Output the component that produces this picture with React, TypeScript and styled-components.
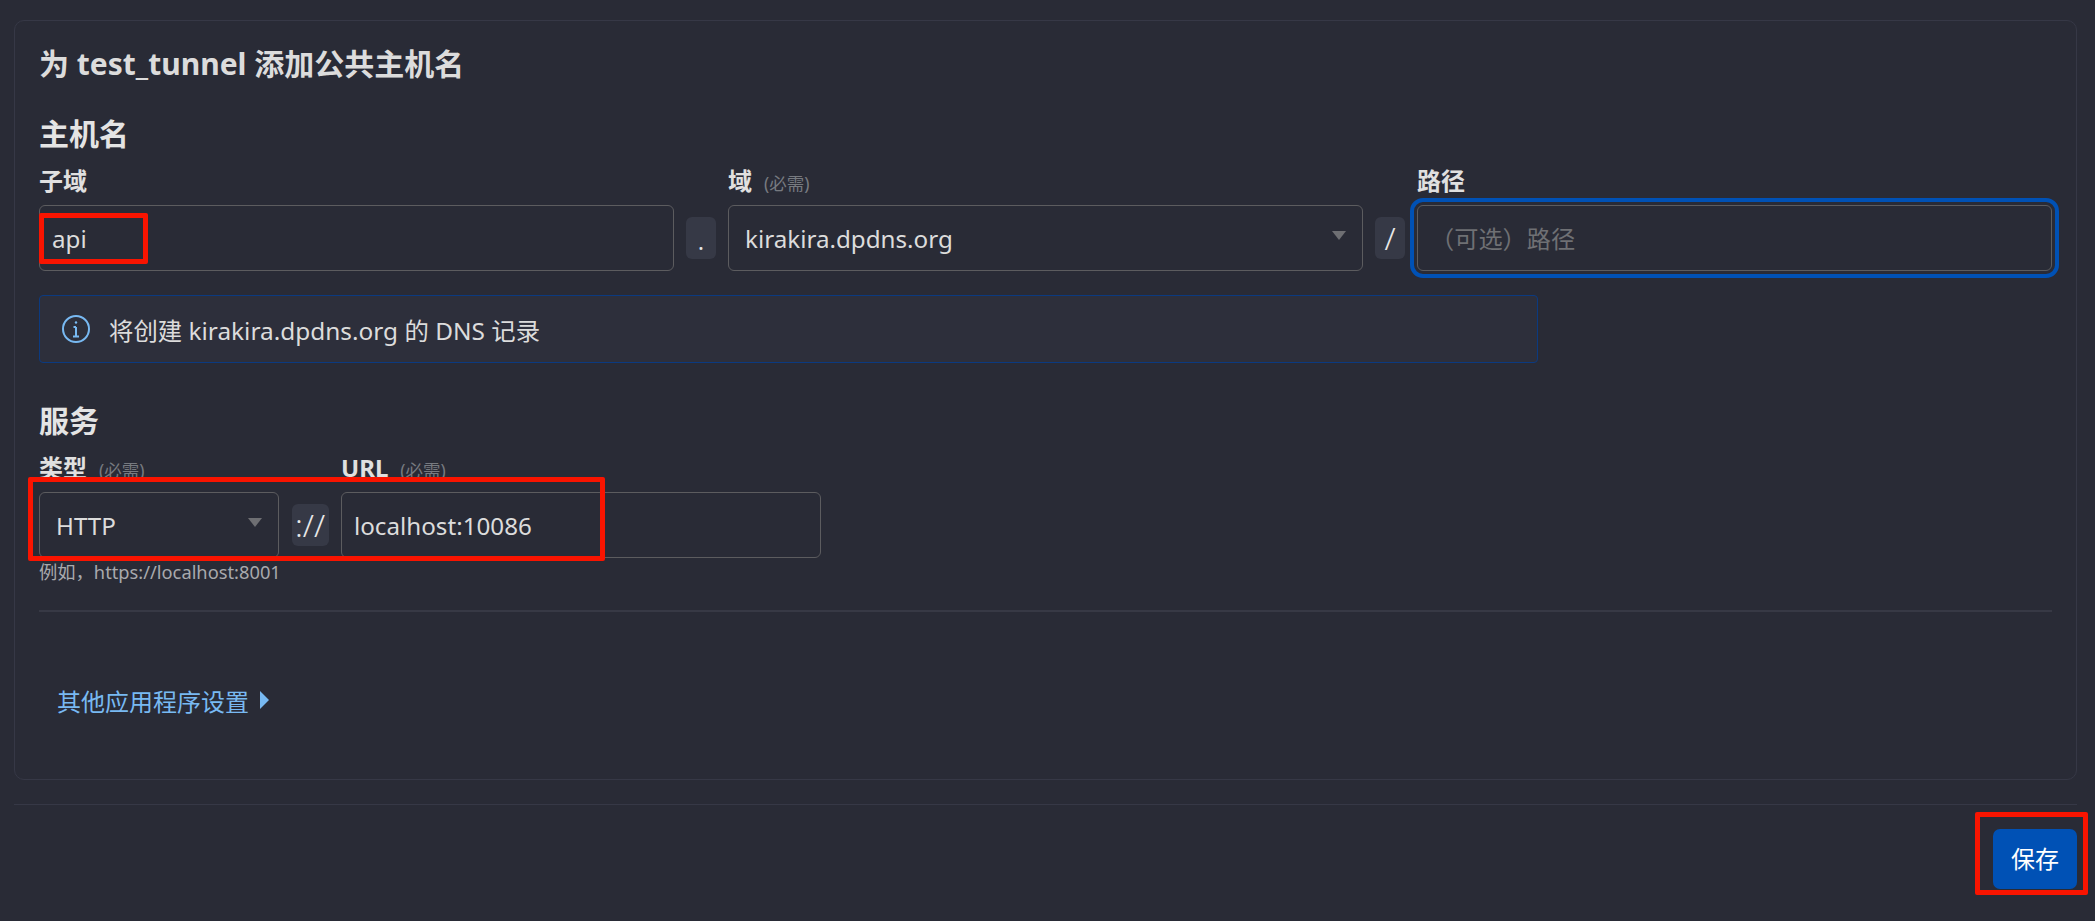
import React from "react";
import styled, { createGlobalStyle } from "styled-components";

const GlobalStyle = createGlobalStyle`
  html, body {
    margin: 0;
    padding: 0;
    background: #292b36;
  }
  body {
    font-family: "Noto Sans", "Noto Sans CJK SC", sans-serif;
    color: #dcdcdc;
  }
`;

const Page = styled.div`
  position: relative;
  width: 2095px;
  height: 921px;
  padding: 20px 18px 0 14px;
  box-sizing: border-box;
  overflow: hidden;
`;

const Card = styled.section`
  height: 760px;
  box-sizing: border-box;
  border: 1px solid #363846;
  border-radius: 10px;
  padding: 24px 24px 0;
`;

const Title = styled.h2`
  margin: 0;
  height: 38px;
  line-height: 38px;
  font-size: 30px;
  font-weight: 700;
  color: #dcdcdc;
`;

const SectionTitle = styled.h3<{ $top: number }>`
  margin: ${(p) => p.$top}px 0 12px;
  height: 40px;
  line-height: 40px;
  font-size: 30px;
  font-weight: 700;
  color: #e4e4e4;
`;

const HostGrid = styled.div`
  display: grid;
  grid-template-columns: 635px 30px 635px 30px 635px;
  column-gap: 12px;
  align-items: center;
`;

const ServiceGrid = styled.div`
  display: grid;
  grid-template-columns: 240px 37px 480px;
  column-gap: 12.5px;
  align-items: center;
`;

const Label = styled.label<{ $column: number }>`
  grid-column: ${(p) => p.$column};
  height: 30px;
  line-height: 30px;
  margin-bottom: 9px;
  font-size: 24px;
  font-weight: 700;
  color: #e0e0e0;
  white-space: nowrap;
`;

const Required = styled.span`
  margin-left: 12px;
  font-size: 17.5px;
  font-weight: 400;
  color: #777a80;
`;

const TextInput = styled.input`
  display: block;
  width: 100%;
  height: 66px;
  box-sizing: border-box;
  background: transparent;
  border: 1px solid #5c5c5f;
  border-radius: 6px;
  padding: 0 12px;
  font: 400 24.2px "Noto Sans", "Noto Sans CJK SC", sans-serif;
  color: #dcdcdc;
  outline: none;

  &::placeholder {
    color: #6f7074;
  }
`;

const FocusedInput = styled(TextInput)`
  outline: 4px solid #0051b5;
  outline-offset: 3px;
`;

const SelectBox = styled.div`
  position: relative;
  display: flex;
  align-items: center;
  height: 66px;
  box-sizing: border-box;
  border: 1px solid #5c5c5f;
  border-radius: 6px;
  padding: 0 16px;
  font-size: 24.2px;
  color: #dcdcdc;
`;

const Caret = styled.span`
  position: absolute;
  right: 16px;
  top: 25px;
  width: 0;
  height: 0;
  border-left: 7px solid transparent;
  border-right: 7px solid transparent;
  border-top: 9px solid #6e6f73;
`;

const Separator = styled.span`
  display: flex;
  align-items: center;
  justify-content: center;
  height: 42px;
  border-radius: 6px;
  background: #363946;
  font-size: 32px;
  font-weight: 300;
  line-height: 1;
  color: #e8e8e8;
`;

const InfoBox = styled.div`
  display: flex;
  align-items: center;
  gap: 19px;
  width: 1499px;
  height: 68px;
  box-sizing: border-box;
  margin-top: 24px;
  padding-left: 22px;
  background: #2d2f3b;
  border: 1px solid #0b3a80;
  border-radius: 4px;
  font-size: 24.4px;
  color: #dcdcdc;
`;

const Hint = styled.div`
  margin-top: 2px;
  height: 24px;
  line-height: 24px;
  font-size: 18.3px;
  color: #a8a9ad;
`;

const Divider = styled.hr`
  margin: 26px 0 0;
  border: 0;
  height: 2px;
  background: #373945;
`;

const MoreLink = styled.a`
  display: inline-flex;
  align-items: center;
  gap: 11px;
  margin: 72px 0 0 18px;
  height: 32px;
  font-size: 24px;
  color: #78b9f2;
`;

const Footer = styled.footer`
  margin-top: 24px;
  border-top: 1px solid #363846;
  padding-top: 24px;
  display: flex;
  justify-content: flex-end;
`;

const SaveButton = styled.button`
  width: 84px;
  height: 60px;
  border: 0;
  border-radius: 7px;
  padding: 0 0 3px;
  background: #0051b5;
  color: #fff;
  font: 400 24px "Noto Sans", "Noto Sans CJK SC", sans-serif;
`;

// red rectangles someone drew over the screenshot
const Annotation = styled.div<{ $x: number; $y: number; $w: number; $h: number }>`
  position: absolute;
  left: ${(p) => p.$x}px;
  top: ${(p) => p.$y}px;
  width: ${(p) => p.$w}px;
  height: ${(p) => p.$h}px;
  box-sizing: border-box;
  border: 5px solid #f91400;
  border-radius: 2px;
  pointer-events: none;
`;

const InfoIcon = () => (
  <svg width="28" height="28" viewBox="0 0 28 28" fill="none" stroke="#78b9f2" strokeWidth="2">
    <circle cx="14" cy="14" r="13" />
    <path d="M14 12v9M11.5 12H14M11 21.5h6" />
    <circle cx="14" cy="7.5" r="1.2" fill="#78b9f2" stroke="none" />
  </svg>
);

const ArrowIcon = () => (
  <svg width="9" height="18" viewBox="0 0 9 18">
    <path d="M0 0l9 9-9 9z" fill="#78b9f2" />
  </svg>
);

export default function App() {
  return (
    <Page>
      <GlobalStyle />
      <Card>
        <Title>为 test_tunnel 添加公共主机名</Title>
        <SectionTitle $top={31}>主机名</SectionTitle>
        <HostGrid>
          <Label $column={1}>子域</Label>
          <Label $column={3}>
            域<Required>(必需)</Required>
          </Label>
          <Label $column={5}>路径</Label>
          <TextInput defaultValue="api" />
          <Separator>.</Separator>
          <SelectBox>
            kirakira.dpdns.org
            <Caret />
          </SelectBox>
          <Separator>/</Separator>
          <FocusedInput placeholder="（可选）路径" />
        </HostGrid>
        <InfoBox>
          <InfoIcon />
          将创建 kirakira.dpdns.org 的 DNS 记录
        </InfoBox>
        <SectionTitle $top={38}>服务</SectionTitle>
        <ServiceGrid>
          <Label $column={1}>
            类型<Required>(必需)</Required>
          </Label>
          <Label $column={3}>
            URL<Required>(必需)</Required>
          </Label>
          <SelectBox>
            HTTP
            <Caret />
          </SelectBox>
          <Separator>://</Separator>
          <TextInput defaultValue="localhost:10086" />
        </ServiceGrid>
        <Hint>例如，https://localhost:8001</Hint>
        <Divider />
        <MoreLink>
          其他应用程序设置
          <ArrowIcon />
        </MoreLink>
      </Card>
      <Footer>
        <SaveButton>保存</SaveButton>
      </Footer>
      <Annotation $x={39} $y={213} $w={109} $h={51} />
      <Annotation $x={28} $y={477} $w={577} $h={84} />
      <Annotation $x={1975} $y={812} $w={113} $h={83} />
    </Page>
  );
}
